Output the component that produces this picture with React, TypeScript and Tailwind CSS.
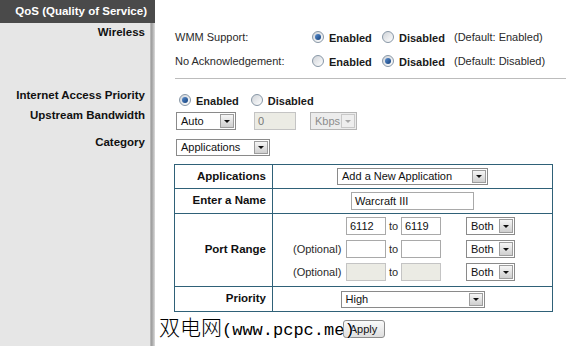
import React from "react";

type SelectProps = { w: number; h?: number; text: string; disabled?: boolean };

function Select({ w, h = 17, text, disabled }: SelectProps) {
  return (
    <div
      className={`flex items-stretch border p-[1px] ${disabled ? "border-[#b5b5b5] bg-[#ececec]" : "border-[#8a8a8a] bg-white"}`}
      style={{ width: w, height: h }}
    >
      <span className={`flex-1 pl-[3px] text-[11px] leading-[13px] self-center whitespace-nowrap ${disabled ? "text-[#8c8c8c]" : "text-[#111]"}`}>
        {text}
      </span>
      <span
        className={`w-[14px] flex items-center justify-center border ${disabled ? "border-[#c8c8c8] bg-[#eeeeee]" : "border-[#9d9d9d] bg-gradient-to-b from-[#f6f6f6] to-[#cfcfcf]"}`}
      >
        <span
          className={`block w-0 h-0 border-l-[3px] border-r-[3px] border-t-[3px] border-l-transparent border-r-transparent ${disabled ? "border-t-[#a8a8a8]" : "border-t-[#111]"}`}
        />
      </span>
    </div>
  );
}

function Input({ w, h = 18, value, disabled }: { w: number; h?: number; value?: string; disabled?: boolean }) {
  return (
    <div
      className={`flex items-center border pl-[3px] text-[11px] ${disabled ? "border-[#c4c4c4] bg-[#ebebe4] text-[#777]" : "border-[#a9a9a9] bg-white text-[#111]"}`}
      style={{ width: w, height: h }}
    >
      {value}
    </div>
  );
}

function Radio({ on }: { on?: boolean }) {
  return (
    <span className="w-[12px] h-[12px] rounded-full border border-[#8897a6] bg-gradient-to-br from-[#cfd3d8] to-white flex items-center justify-center shrink-0">
      {on && <span className="w-[6px] h-[6px] rounded-full bg-gradient-to-br from-[#5a8fd0] to-[#123f7a]" />}
    </span>
  );
}

function RadioOpt({ on, label }: { on?: boolean; label: string }) {
  return (
    <span className="flex items-center gap-[5px]">
      <Radio on={on} />
      <span className="text-[11px] font-bold text-[#1a1a1a] pt-[2px]">{label}</span>
    </span>
  );
}

export default function App() {
  return (
    <div className="relative w-[566px] h-[346px] overflow-hidden flex bg-white font-['Liberation_Sans',Arial,sans-serif]">
      {/* sidebar */}
      <div className="w-[150px] flex flex-col bg-[#e6e6e6] text-right">
        <div className="h-[23px] bg-[#4a4a4a] flex items-center justify-end pr-[3px] pt-[1px] text-[11.5px] font-bold text-white whitespace-nowrap">
          QoS (Quality of Service)
        </div>
        <div className="pr-[5px] text-[11.5px] leading-[14px] font-bold text-[#111]">
          <div className="mt-[2px]">Wireless</div>
          <div className="mt-[49px]">Internet Access Priority</div>
          <div className="mt-[6px]">Upstream Bandwidth</div>
          <div className="mt-[13px]">Category</div>
        </div>
      </div>

      {/* shadow strip */}
      <div className="w-[5px] flex flex-col">
        <div className="h-[23px] bg-[#4a4a4a]" />
        <div className="flex-1 bg-[linear-gradient(to_right,#c2c2c2,#9d9d9d,#bcbcbc,#dcdcdc)]" />
      </div>

      {/* content */}
      <div className="flex-1 pl-[20px] pt-[25px] text-[11px] text-[#2a2a2a]">
        <div className="grid grid-cols-[137px_70px_72px_auto] auto-rows-[24px] items-center">
          <span>WMM Support:</span>
          <RadioOpt on label="Enabled" />
          <RadioOpt label="Disabled" />
          <span>(Default: Enabled)</span>
          <span>No Acknowledgement:</span>
          <RadioOpt label="Enabled" />
          <RadioOpt on label="Disabled" />
          <span>(Default: Disabled)</span>
        </div>
        <div className="mt-[5px] h-px bg-[#bcbcbc]" />

        <div className="mt-[11px] h-[20px] pl-[4px] flex items-center gap-[12px]">
          <RadioOpt on label="Enabled" />
          <RadioOpt label="Disabled" />
        </div>

        <div className="mt-[2px] ml-[1px] flex items-center">
          <Select w={60} h={18} text="Auto" />
          <div className="ml-[18px]">
            <Input w={42} value="0" disabled />
          </div>
          <div className="ml-[14px]">
            <Select w={47} h={18} text="Kbps" disabled />
          </div>
        </div>

        <div className="mt-[9px] ml-[1px]">
          <Select w={94} text="Applications" />
        </div>

        <div className="mt-[8px] -ml-px w-[379px]">
          <div className="grid grid-cols-[98px_280px] border-l border-t border-[#2f6178]">
            <div className="h-[24px] border-r border-b border-[#2f6178] flex items-center justify-end pr-[6px] text-[11.5px] font-bold text-[#111]">Applications</div>
            <div className="h-[24px] border-r border-b border-[#2f6178] flex items-center justify-center">
              <Select w={151} text="Add a New Application" />
            </div>

            <div className="h-[25px] border-r border-b border-[#2f6178] flex items-center justify-end pr-[6px] text-[11.5px] font-bold text-[#111]">Enter a Name</div>
            <div className="h-[25px] border-r border-b border-[#2f6178] flex items-center justify-center">
              <Input w={123} value="Warcraft III" />
            </div>

            <div className="h-[73px] border-r border-b border-[#2f6178] flex items-center justify-end pr-[6px] text-[11.5px] font-bold text-[#111]">Port Range</div>
            <div className="h-[73px] border-r border-b border-[#2f6178] pl-[20px] pt-[3px]">
              <div className="grid grid-cols-[53px_40px_15px_40px_25px_49px] auto-rows-[18px] gap-y-[5px] items-center">
                <span />
                <Input w={40} value="6112" />
                <span className="pl-[3px]">to</span>
                <Input w={40} value="6119" />
                <span />
                <Select w={49} h={18} text="Both" />

                <span className="text-right pr-[6px]">(Optional)</span>
                <Input w={40} />
                <span className="pl-[3px]">to</span>
                <Input w={40} />
                <span />
                <Select w={49} h={18} text="Both" />

                <span className="text-right pr-[6px]">(Optional)</span>
                <Input w={40} disabled />
                <span className="pl-[3px]">to</span>
                <Input w={40} disabled />
                <span />
                <Select w={49} h={18} text="Both" />
              </div>
            </div>

            <div className="h-[25px] border-r border-b border-[#2f6178] flex items-center justify-end pr-[6px] text-[11.5px] font-bold text-[#111]">Priority</div>
            <div className="h-[25px] border-r border-b border-[#2f6178] flex items-center justify-center">
              <Select w={144} text="High" />
            </div>
          </div>

          <div className="mt-[8px] flex justify-center">
            <button className="w-[42px] h-[18px] rounded-[3px] border border-[#8c8c8c] bg-gradient-to-b from-[#fafafa] to-[#dedede] text-[11px] text-[#111] leading-none">
              Apply
            </button>
          </div>
        </div>
      </div>

      {/* watermark */}
      <div className="absolute left-[159px] top-[311px] flex items-baseline text-black [text-shadow:0_0_2px_#fff,0_0_2px_#fff]">
        <span className="text-[21px] font-['Noto_Sans_CJK_SC',sans-serif] font-light">双电网</span>
        <span className="text-[17px] font-['Liberation_Mono',monospace]">(www.pcpc.me)</span>
      </div>
    </div>
  );
}
